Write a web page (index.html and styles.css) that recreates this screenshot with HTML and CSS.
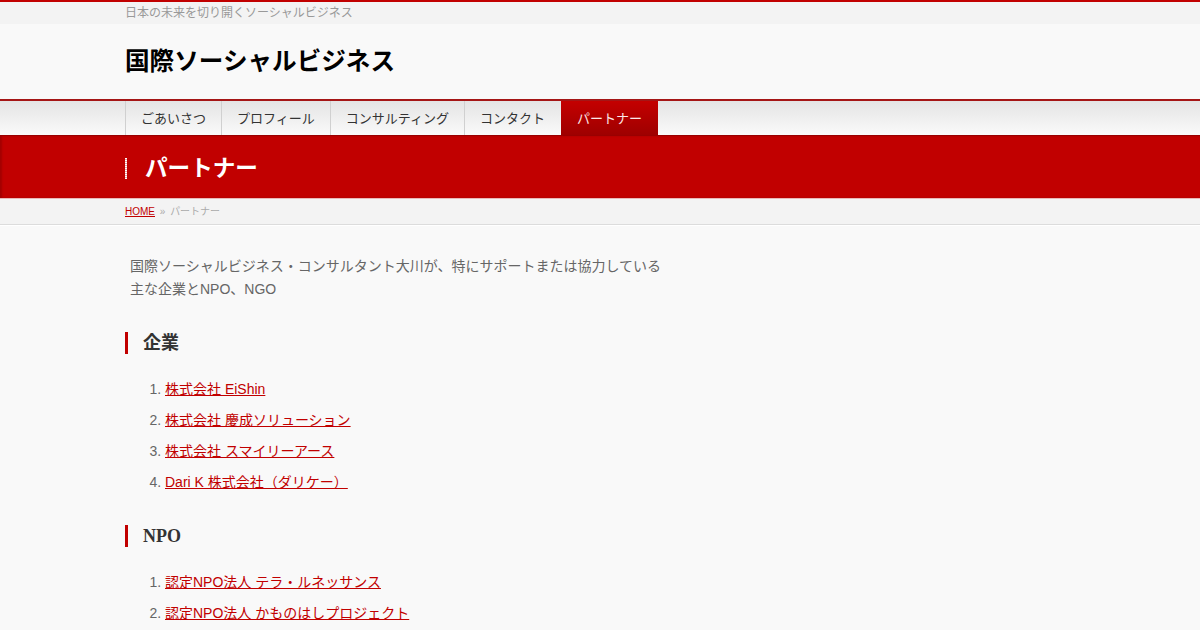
FILE: index.html
```html
<!DOCTYPE html>
<html lang="ja">
<head>
  <meta charset="UTF-8">
  <meta name="viewport" content="width=device-width, initial-scale=1.0">
  <title>パートナー | 国際ソーシャルビジネス</title>
  <link rel="stylesheet" href="styles.css">
</head>
<body>
  <!-- キャッチフレーズ -->
  <div class="topbar">
    <div class="inner">日本の未来を切り開くソーシャルビジネス</div>
  </div>

  <header class="site-header">
    <div class="inner">
      <a class="site-title" href="#">国際ソーシャルビジネス</a>
    </div>
  </header>

  <!-- グローバルナビ -->
  <nav class="global-nav">
    <ul class="inner nav-list">
      <li><a href="#">ごあいさつ</a></li>
      <li><a href="#">プロフィール</a></li>
      <li><a href="#">コンサルティング</a></li>
      <li><a href="#">コンタクト</a></li>
      <li class="current"><a href="#">パートナー</a></li>
    </ul>
  </nav>

  <div class="page-title">
    <div class="inner">
      <h1>パートナー</h1>
    </div>
  </div>

  <div class="breadcrumb">
    <div class="inner">
      <a href="#">HOME</a> <span class="sep">»</span> <span>パートナー</span>
    </div>
  </div>

  <main class="inner content">
    <p class="lead">国際ソーシャルビジネス・コンサルタント大川が、特にサポートまたは協力している<br>主な企業とNPO、NGO</p>

    <h2>企業</h2>
    <ol>
      <li><a href="#">株式会社 EiShin</a></li>
      <li><a href="#">株式会社 慶成ソリューション</a></li>
      <li><a href="#">株式会社 スマイリーアース</a></li>
      <li><a href="#">Dari K 株式会社（ダリケー）</a></li>
    </ol>

    <h2>NPO</h2>
    <ol>
      <li><a href="#">認定NPO法人 テラ・ルネッサンス</a></li>
      <li><a href="#">認定NPO法人 かものはしプロジェクト</a></li>
    </ol>
  </main>
</body>
</html>
```

FILE: styles.css
```css
body {
  margin: 0;
  padding: 0;
  background-color: #f9f9f9;
  font-family: "Liberation Sans", "Noto Sans CJK JP", sans-serif;
  color: #666;
}

.inner {
  width: 950px;
  margin: 0 auto;
}

/* キャッチフレーズ */
.topbar {
  border-top: 2px solid #c10000;
  background-color: #f3f3f3;
  height: 22px;
  line-height: 22px;
  font-size: 12px;
  color: #999;
}

.site-header {
  height: 75px;
  display: flex;
  align-items: center;
  background-color: #f9f9f9;
}

.site-title {
  font-size: 24.6px;
  font-weight: bold;
  color: #000;
  text-decoration: none;
  line-height: 30px;
}

/* ナビゲーション */
.global-nav {
  border-top: 2px solid #a51616;
  height: 34px;
  background: linear-gradient(#e4e4e4, #fafafa);
}

.nav-list {
  display: flex;
  list-style: none;
  margin: 0 auto;
  padding: 0;
  height: 34px;
}

.nav-list li {
  border-left: 1px solid #d0d0d0;
}

.nav-list li:last-child {
  border-left-color: transparent;
}

.nav-list a {
  display: block;
  padding: 2px 15px 0;
  line-height: 32px;
  font-size: 13px;
  color: #333;
  text-decoration: none;
}

.nav-list .current a {
  padding: 2px 16px 0;
  background: linear-gradient(#c40000, #9e0000);
  color: #fde8e8;
}

/* ページタイトル */
.page-title {
  background-color: #c10000;
  border-top: 1px solid #9a0000;
  border-bottom: 1px solid #e9b8b8;
  height: 62px;
  display: flex;
  align-items: center;
  box-shadow: inset 2px 0 2px rgba(0, 0, 0, 0.15);
}

.page-title h1 {
  margin: 3px 0 0;
  position: relative;
  padding-left: 20px;
  font-size: 22.6px;
  line-height: 30px;
  color: #fff;
}

.page-title h1::before {
  content: "";
  position: absolute;
  left: 0;
  top: 4px;
  width: 2px;
  height: 21px;
  background-image: repeating-linear-gradient(180deg, #fff 0 1px, #e9a0a0 1px 2px);
}

/* パンくず */
.breadcrumb {
  background-color: #f3f3f3;
  border-bottom: 1px solid #dcdcdc;
  box-shadow: 0 1px 0 #fff;
  height: 25px;
  line-height: 25px;
  font-size: 10px;
  color: #aaa;
}

.breadcrumb a {
  color: #c10000;
}

.breadcrumb .sep {
  margin: 0 2px;
}

/* 本文 */
.content {
  padding-top: 30px;
}

.lead {
  margin: 0 0 31px;
  padding-left: 5px;
  font-size: 14px;
  line-height: 23px;
}

.content h2 {
  margin: 0 0 20px;
  padding-left: 15px;
  border-left: 3px solid #c10000;
  font-family: "Liberation Serif", "Noto Sans CJK JP", serif;
  font-size: 18px;
  line-height: 22px;
  color: #333;
}

.content ol {
  margin: 0 0 27px;
  padding-left: 40px;
  font-size: 14px;
  line-height: 31px;
}

.content ol a {
  color: #c10000;
}
```
